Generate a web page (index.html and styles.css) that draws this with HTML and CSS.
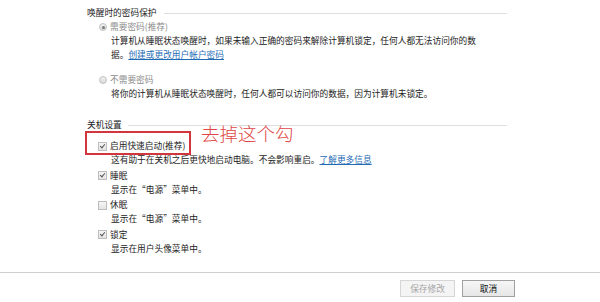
FILE: index.html
```html
<!DOCTYPE html>
<html lang="zh-CN">

<head>
    <meta charset="UTF-8">
    <meta name="viewport" content="width=device-width, initial-scale=1.0">
    <title>电源选项 - 系统设置</title>
    <link rel="stylesheet" href="styles.css">
</head>

<body>
    <div class="content">
        <div class="group-title">唤醒时的密码保护</div>

        <div class="option">
            <span class="radio checked"></span>
            <span class="label disabled">需要密码(推荐)</span>
        </div>
        <div class="desc">计算机从睡眠状态唤醒时，如果未输入正确的密码来解除计算机锁定，任何人都无法访问你的数<br>据。<a href="#">创建或更改用户帐户密码</a></div>

        <div class="option spaced">
            <span class="radio"></span>
            <span class="label disabled">不需要密码</span>
        </div>
        <div class="desc">将你的计算机从睡眠状态唤醒时，任何人都可以访问你的数据，因为计算机未锁定。</div>

        <div class="group-title second">关机设置</div>

        <div class="check-list">
            <div class="check-item">
                <div class="option">
                    <span class="checkbox checked"></span>
                    <span class="label">启用快速启动(推荐)</span>
                </div>
                <div class="desc">这有助于在关机之后更快地启动电脑。不会影响重启。<a href="#">了解更多信息</a></div>
                <div class="note-box"></div>
                <div class="note-text">去掉这个勾</div>
            </div>
            <div class="check-item">
                <div class="option">
                    <span class="checkbox checked"></span>
                    <span class="label">睡眠</span>
                </div>
                <div class="desc">显示在“电源”菜单中。</div>
            </div>
            <div class="check-item">
                <div class="option">
                    <span class="checkbox"></span>
                    <span class="label">休眠</span>
                </div>
                <div class="desc">显示在“电源”菜单中。</div>
            </div>
            <div class="check-item">
                <div class="option">
                    <span class="checkbox checked"></span>
                    <span class="label">锁定</span>
                </div>
                <div class="desc">显示在用户头像菜单中。</div>
            </div>
        </div>
    </div>

    <div class="footer">
        <button class="btn" disabled>保存修改</button>
        <button class="btn primary">取消</button>
    </div>
</body>

</html>
```

FILE: styles.css
```css
*,
*::before,
*::after {
    box-sizing: border-box;
}

body {
    margin: 0;
    background-color: #ffffff;
    color: #222222;
    font-family: "Noto Sans CJK SC", "Liberation Sans", sans-serif;
    font-size: 8.7px;
    line-height: 14px;
}

.content {
    width: 420px;
    margin-left: 87px;
    padding-top: 6px;
    height: 272px;
}

/* group headings with the rule running to the right */
.group-title {
    display: flex;
    align-items: center;
    gap: 7px;
    color: #222222;
}

.group-title::after {
    content: "";
    flex: 1;
    border-top: 1px solid #dedede;
}

.group-title.second {
    margin-top: 17px;
    gap: 6px;
}

.option {
    display: flex;
    align-items: center;
    padding-left: 12px;
    gap: 3px;
}

.option.spaced {
    margin-top: 11px;
}

.label.disabled {
    color: #8c8c8c;
}

.desc {
    padding-left: 24px;
    width: 420px;
}

.desc a {
    color: #1f6cb5;
    text-decoration: underline;
}

.radio {
    display: inline-block;
    width: 8px;
    height: 8px;
    border: 1px solid #c2c2c2;
    border-radius: 50%;
    background: linear-gradient(#f0f0f0, #dadada);
    position: relative;
}

.radio.checked::after {
    content: "";
    position: absolute;
    left: 1.5px;
    top: 1.5px;
    width: 3px;
    height: 3px;
    border-radius: 50%;
    background-color: #7a7a7a;
}

.check-list {
    margin-top: 7px;
}

.check-item {
    position: relative;
    margin-bottom: 1.5px;
}

.check-item .option {
    padding-left: 11px;
}

.checkbox {
    display: inline-block;
    width: 9px;
    height: 9px;
    border: 1px solid #bdbdbd;
    background: linear-gradient(#f5f5f5, #e4e4e4);
    position: relative;
}

.checkbox.checked::after {
    content: "";
    position: absolute;
    left: 2px;
    top: 0px;
    width: 3px;
    height: 5px;
    border-right: 1.3px solid #555555;
    border-bottom: 1.3px solid #555555;
    transform: rotate(40deg);
}

/* red annotation over the fast startup option */
.note-box {
    position: absolute;
    left: -2px;
    top: -8px;
    width: 106px;
    height: 24px;
    border: 2px solid #d2363c;
}

.note-text {
    position: absolute;
    left: 114px;
    top: -18px;
    font-size: 18.5px;
    line-height: 24px;
    color: #e04646;
    font-weight: 300;
}

.footer {
    border-top: 1px solid #cfcfcf;
    display: flex;
    justify-content: flex-end;
    gap: 7px;
    padding: 7px 85px 0 0;
}

.btn {
    height: 17px;
    width: 55px;
    padding: 0;
    font-family: "Noto Sans CJK SC", "Liberation Sans", sans-serif;
    font-size: 8.7px;
    line-height: 15px;
    color: #111111;
    border: 1px solid #a0a0a0;
    background: linear-gradient(#f6f6f6, #e6e6e6);
}

.btn:disabled {
    color: #a5a5a5;
    border-color: #d6d6d6;
    background: #f4f4f4;
}

.btn.primary {
    width: 53px;
}
```
